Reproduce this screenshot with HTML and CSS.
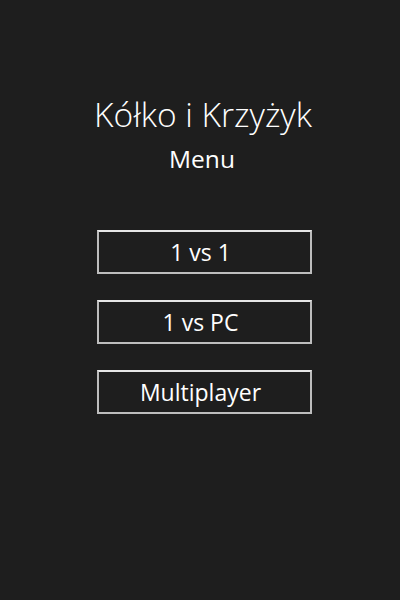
FILE: index.html
```html
<!DOCTYPE html>
<html lang="pl">
<head>
<meta charset="utf-8">
<link rel="stylesheet" href="styles.css">
</head>
<body>
<main class="screen">
  <h1 class="title">Kółko i Krzyżyk</h1>
  <h2 class="subtitle">Menu</h2>
  <nav class="menu">
    <button class="btn">1 vs 1</button>
    <button class="btn">1 vs PC</button>
    <button class="btn">Multiplayer</button>
  </nav>
</main>
</body>
</html>
```
FILE: styles.css
```css
html, body {
  margin: 0;
  padding: 0;
  background: #1e1e1e;
}
.screen {
  width: 400px;
  height: 600px;
  display: flex;
  flex-direction: column;
  align-items: center;
  font-family: "Open Sans", "Noto Sans", sans-serif;
  color: #ffffff;
}
.title {
  margin: 92px 0 0 6px;
  font-size: 33.5px;
  font-weight: 300;
  line-height: 44px;
}
.subtitle {
  margin: 8px 0 0 4px;
  font-size: 24.5px;
  font-weight: 400;
  line-height: 30px;
}
.menu {
  margin-top: 56px;
  display: flex;
  flex-direction: column;
  gap: 26px;
  margin-left: 8px;
}
.btn {
  box-sizing: border-box;
  width: 215px;
  height: 44px;
  background: #1e1e1e;
  border: 2px solid #bdbdbd;
  border-top-color: #e6e6e6;
  color: #ffffff;
  font-family: "Open Sans", "Noto Sans", sans-serif;
  font-size: 23px;
  padding: 0 7px 0 0;
}
```
